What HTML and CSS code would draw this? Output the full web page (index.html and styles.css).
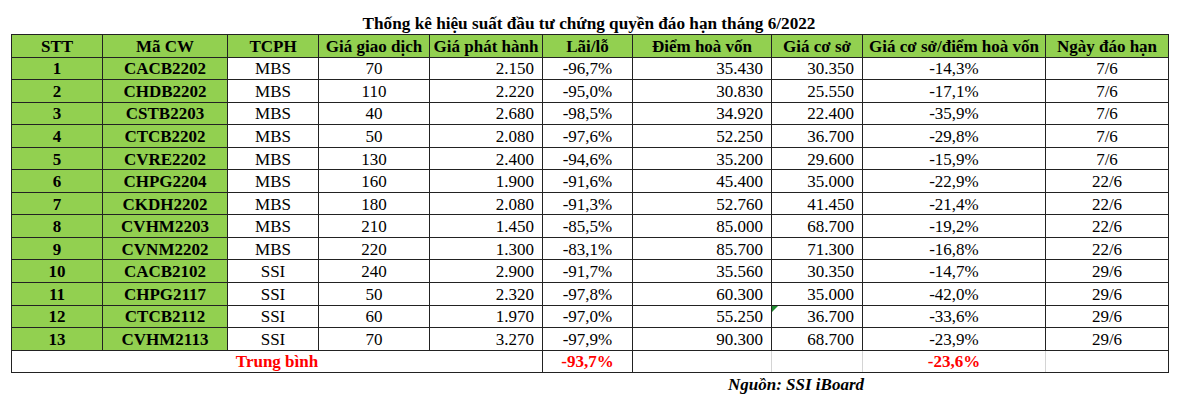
FILE: index.html
```html
<!DOCTYPE html>
<html lang="vi">
<head>
<meta charset="utf-8">
<title>Thống kê hiệu suất đầu tư chứng quyền</title>
<link rel="stylesheet" href="styles.css">
</head>
<body>
<div class="page">
  <h1 class="title">Thống kê hiệu suất đầu tư chứng quyền đáo hạn tháng 6/2022</h1>
  <table class="stats">
    <colgroup>
      <col class="w-stt"><col class="w-code"><col class="w-issuer"><col class="w-trade"><col class="w-issue">
      <col class="w-pl"><col class="w-be"><col class="w-base"><col class="w-ratio"><col class="w-date">
    </colgroup>
    <thead>
      <tr>
        <th>STT</th><th>Mã CW</th><th>TCPH</th><th>Giá giao dịch</th><th>Giá phát hành</th>
        <th>Lãi/lỗ</th><th>Điểm hoà vốn</th><th>Giá cơ sở</th><th>Giá cơ sở/điểm hoà vốn</th><th>Ngày đáo hạn</th>
      </tr>
    </thead>
    <tbody>
      <tr><td class="key">1</td><td class="key">CACB2202</td><td>MBS</td><td>70</td><td class="num">2.150</td><td>-96,7%</td><td class="num">35.430</td><td class="num">30.350</td><td>-14,3%</td><td>7/6</td></tr>
      <tr><td class="key">2</td><td class="key">CHDB2202</td><td>MBS</td><td>110</td><td class="num">2.220</td><td>-95,0%</td><td class="num">30.830</td><td class="num">25.550</td><td>-17,1%</td><td>7/6</td></tr>
      <tr><td class="key">3</td><td class="key">CSTB2203</td><td>MBS</td><td>40</td><td class="num">2.680</td><td>-98,5%</td><td class="num">34.920</td><td class="num">22.400</td><td>-35,9%</td><td>7/6</td></tr>
      <tr><td class="key">4</td><td class="key">CTCB2202</td><td>MBS</td><td>50</td><td class="num">2.080</td><td>-97,6%</td><td class="num">52.250</td><td class="num">36.700</td><td>-29,8%</td><td>7/6</td></tr>
      <tr><td class="key">5</td><td class="key">CVRE2202</td><td>MBS</td><td>130</td><td class="num">2.400</td><td>-94,6%</td><td class="num">35.200</td><td class="num">29.600</td><td>-15,9%</td><td>7/6</td></tr>
      <tr><td class="key">6</td><td class="key">CHPG2204</td><td>MBS</td><td>160</td><td class="num">1.900</td><td>-91,6%</td><td class="num">45.400</td><td class="num">35.000</td><td>-22,9%</td><td>22/6</td></tr>
      <tr><td class="key">7</td><td class="key">CKDH2202</td><td>MBS</td><td>180</td><td class="num">2.080</td><td>-91,3%</td><td class="num">52.760</td><td class="num">41.450</td><td>-21,4%</td><td>22/6</td></tr>
      <tr><td class="key">8</td><td class="key">CVHM2203</td><td>MBS</td><td>210</td><td class="num">1.450</td><td>-85,5%</td><td class="num">85.000</td><td class="num">68.700</td><td>-19,2%</td><td>22/6</td></tr>
      <tr><td class="key">9</td><td class="key">CVNM2202</td><td>MBS</td><td>220</td><td class="num">1.300</td><td>-83,1%</td><td class="num">85.700</td><td class="num">71.300</td><td>-16,8%</td><td>22/6</td></tr>
      <tr><td class="key">10</td><td class="key">CACB2102</td><td>SSI</td><td>240</td><td class="num">2.900</td><td>-91,7%</td><td class="num">35.560</td><td class="num">30.350</td><td>-14,7%</td><td>29/6</td></tr>
      <tr><td class="key">11</td><td class="key">CHPG2117</td><td>SSI</td><td>50</td><td class="num">2.320</td><td>-97,8%</td><td class="num">60.300</td><td class="num">35.000</td><td>-42,0%</td><td>29/6</td></tr>
      <tr><td class="key">12</td><td class="key">CTCB2112</td><td>SSI</td><td>60</td><td class="num">1.970</td><td>-97,0%</td><td class="num">55.250</td><td class="num flagged"><span class="flag"></span>36.700</td><td>-33,6%</td><td>29/6</td></tr>
      <tr><td class="key">13</td><td class="key">CVHM2113</td><td>SSI</td><td>70</td><td class="num">3.270</td><td>-97,9%</td><td class="num">90.300</td><td class="num">68.700</td><td>-23,9%</td><td>29/6</td></tr>
    </tbody>
    <tfoot>
      <tr class="avg">
        <td colspan="5" class="red">Trung bình</td>
        <td class="red">-93,7%</td>
        <td class="soft-right"></td>
        <td class="soft-right"></td>
        <td class="red soft-right">-23,6%</td>
        <td></td>
      </tr>
    </tfoot>
  </table>
  <p class="source">Nguồn: SSI iBoard</p>
</div>
</body>
</html>
```

FILE: styles.css
```css
html, body {
  margin: 0;
  padding: 0;
  background: #ffffff;
}

body {
  font-family: "Liberation Serif", "Times New Roman", serif;
  color: #000;
}

.page {
  width: 1156px;
  padding: 14px 0 0 11px;
}

.title {
  margin: 0;
  font-size: 17.2px;
  line-height: 20px;
  font-weight: bold;
  text-align: center;
}

.stats {
  border-collapse: collapse;
  table-layout: fixed;
  width: 1157px;
  font-size: 17px;
  border: 1px solid #222;
}

.w-stt { width: 91px; }
.w-code { width: 125px; }
.w-issuer { width: 91px; }
.w-trade { width: 111px; }
.w-issue { width: 113px; }
.w-pl { width: 90px; }
.w-be { width: 139px; }
.w-base { width: 91px; }
.w-ratio { width: 183px; }
.w-date { width: 123px; }

.stats tr {
  height: 22.55px;
}

.stats th,
.stats td {
  border: 1px solid #222;
  padding: 1px 0 0;
  line-height: 19px;
  text-align: center;
  vertical-align: middle;
  white-space: nowrap;
  overflow: hidden;
}

.stats th {
  background: #92d050;
  font-weight: bold;
}

.stats td.key {
  background: #92d050;
  font-weight: bold;
}

.stats td.num {
  text-align: right;
  padding-right: 8px;
}

.stats td.flagged {
  position: relative;
}

.flag {
  position: absolute;
  left: 0;
  top: 0;
  width: 0;
  height: 0;
  border-top: 6px solid #1e8a2e;
  border-right: 6px solid transparent;
}

.stats td.red {
  color: #ff0000;
  font-weight: bold;
}

.stats td.soft-right {
  border-right-color: #d4d4d4;
}

.source {
  margin: 2px 0 0 717px;
  font-size: 17px;
  line-height: 20px;
  font-weight: bold;
  font-style: italic;
}
```
